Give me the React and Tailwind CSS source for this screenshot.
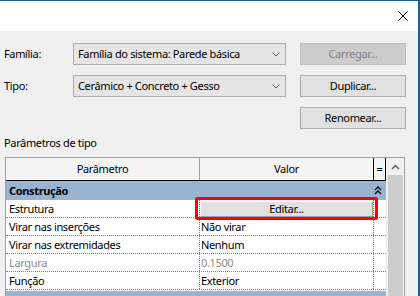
import React from 'react';

const rows = [
    { name: 'Estrutura', value: null },
    { name: 'Virar nas inserções', value: 'Não virar' },
    { name: 'Virar nas extremidades', value: 'Nenhum' },
    { name: 'Largura', value: '0.1500', muted: true },
    { name: 'Função', value: 'Exterior' },
];

function Chevron() {
    return (
        <svg width="8" height="5" viewBox="0 0 8 5" className="shrink-0">
            <path d="M0.5 0.5 L4 4 L7.5 0.5" fill="none" stroke="#606060" strokeWidth="1" />
        </svg>
    );
}

function Combo({ text }) {
    return (
        <div className="w-[213px] h-[22px] flex items-center justify-between pl-[4px] pr-[5px] bg-[#e5e5e5] border border-[#adadad]">
            <span className="truncate">{text}</span>
            <Chevron />
        </div>
    );
}

function Button({ children, disabled }) {
    return (
        <div
            className={`w-[106px] h-[22px] flex items-center justify-center border ${
                disabled
                    ? 'bg-[#cccccc] border-[#bfbfbf] text-[#838383]'
                    : 'bg-[#e1e1e1] border-[#adadad]'
            }`}
        >
            {children}
        </div>
    );
}

export default function App() {
    return (
        <div className="w-[420px] h-[296px] overflow-hidden bg-[#f0f0f0] border-t border-t-[#1c5c97] border-r-2 border-r-[#1c5c97] font-['Noto_Sans',sans-serif] text-[11px] tracking-[-0.35px] leading-[16px] text-black">
            {/* Title bar */}
            <div className="h-[30px] bg-white flex justify-end items-start pt-[10px] pr-[10px]">
                <svg width="10" height="10" viewBox="0 0 10 10">
                    <path d="M0.5 0.5 L9.5 9.5 M9.5 0.5 L0.5 9.5" stroke="#000" strokeWidth="1" />
                </svg>
            </div>

            <div className="pt-[12px]">
                <div className="flex items-center h-[22px]">
                    <div className="w-[73px] pl-[4px]">Família:</div>
                    <Combo text="Família do sistema: Parede básica" />
                    <div className="ml-[14px]">
                        <Button disabled>Carregar...</Button>
                    </div>
                </div>
                <div className="flex items-center h-[22px] mt-[10px]">
                    <div className="w-[73px] pl-[4px]">Tipo:</div>
                    <Combo text="Cerâmico + Concreto + Gesso" />
                    <div className="ml-[14px]">
                        <Button>Duplicar...</Button>
                    </div>
                </div>
                <div className="flex items-center h-[22px] mt-[10px] pl-[300px]">
                    <Button>Renomear...</Button>
                </div>

                <div className="mt-[6px] pl-[4px] h-[16px]">Parâmetros de tipo</div>

                {/* Table */}
                <div className="mt-[6px] ml-[5px] w-[400px] h-[200px] border border-[#a0a0a0] bg-white flex">
                    <div className="w-[380px] flex flex-col">
                        {/* Header */}
                        <div className="h-[23px] flex bg-[#f4f4f4] border-b border-black">
                            <div className="w-[194px] border-r border-[#a0a0a0] flex items-center justify-center">Parâmetro</div>
                            <div className="w-[174px] border-r border-black flex items-center justify-center">Valor</div>
                            <div className="w-[12px] border-r border-black flex items-center justify-center">=</div>
                        </div>
                        {/* Group */}
                        <div className="h-[19px] bg-[#99b4d1] flex items-center justify-between pl-[3px] pr-[4px] font-bold">
                            <span>Construção</span>
                            <svg width="8" height="9" viewBox="0 0 8 9">
                                <path d="M1 4 L4 1 L7 4 M1 8 L4 5 L7 8" fill="none" stroke="#000" strokeWidth="1.3" />
                            </svg>
                        </div>
                        {rows.map((r) => (
                            <div key={r.name} className="h-[18px] flex border-b border-dotted border-[#808080]">
                                <div className={`w-[194px] pl-[3px] border-r border-dotted border-[#808080] flex items-center ${r.muted ? 'text-[#8c8c8c]' : ''}`}>
                                    {r.name}
                                </div>
                                <div className={`w-[174px] border-r border-dotted border-[#808080] flex items-center relative ${r.muted ? 'text-[#8c8c8c]' : ''}`}>
                                    {r.value === null ? (
                                        <>
                                            <div className="w-full h-[16px] bg-[#e1e1e1] border border-t-[#f8f8f8] border-l-[#f8f8f8] border-r-[#a0a0a0] border-b-[#a0a0a0] flex items-center justify-center">
                                                Editar...
                                            </div>
                                            <div className="absolute left-[-5px] top-[-3px] w-[183px] h-[23px] border-[3px] border-[#ff0000] rounded-[2px]" />
                                        </>
                                    ) : (
                                        <span className="pl-[1px]">{r.value}</span>
                                    )}
                                </div>
                                <div className="w-[12px]" />
                            </div>
                        ))}
                        <div className="h-[19px] mt-[1px] bg-[#99b4d1]" />
                    </div>
                    {/* Scrollbar */}
                    <div className="w-[18px] bg-[#f0f0f0] flex flex-col items-center">
                        <div className="h-[17px] flex items-center justify-center">
                            <svg width="9" height="6" viewBox="0 0 9 6">
                                <path d="M1 5 L4.5 1.5 L8 5" fill="none" stroke="#606060" strokeWidth="1.5" />
                            </svg>
                        </div>
                        <div className="w-[15px] flex-1 bg-[#cdcdcd]" />
                    </div>
                </div>
            </div>
        </div>
    );
}
